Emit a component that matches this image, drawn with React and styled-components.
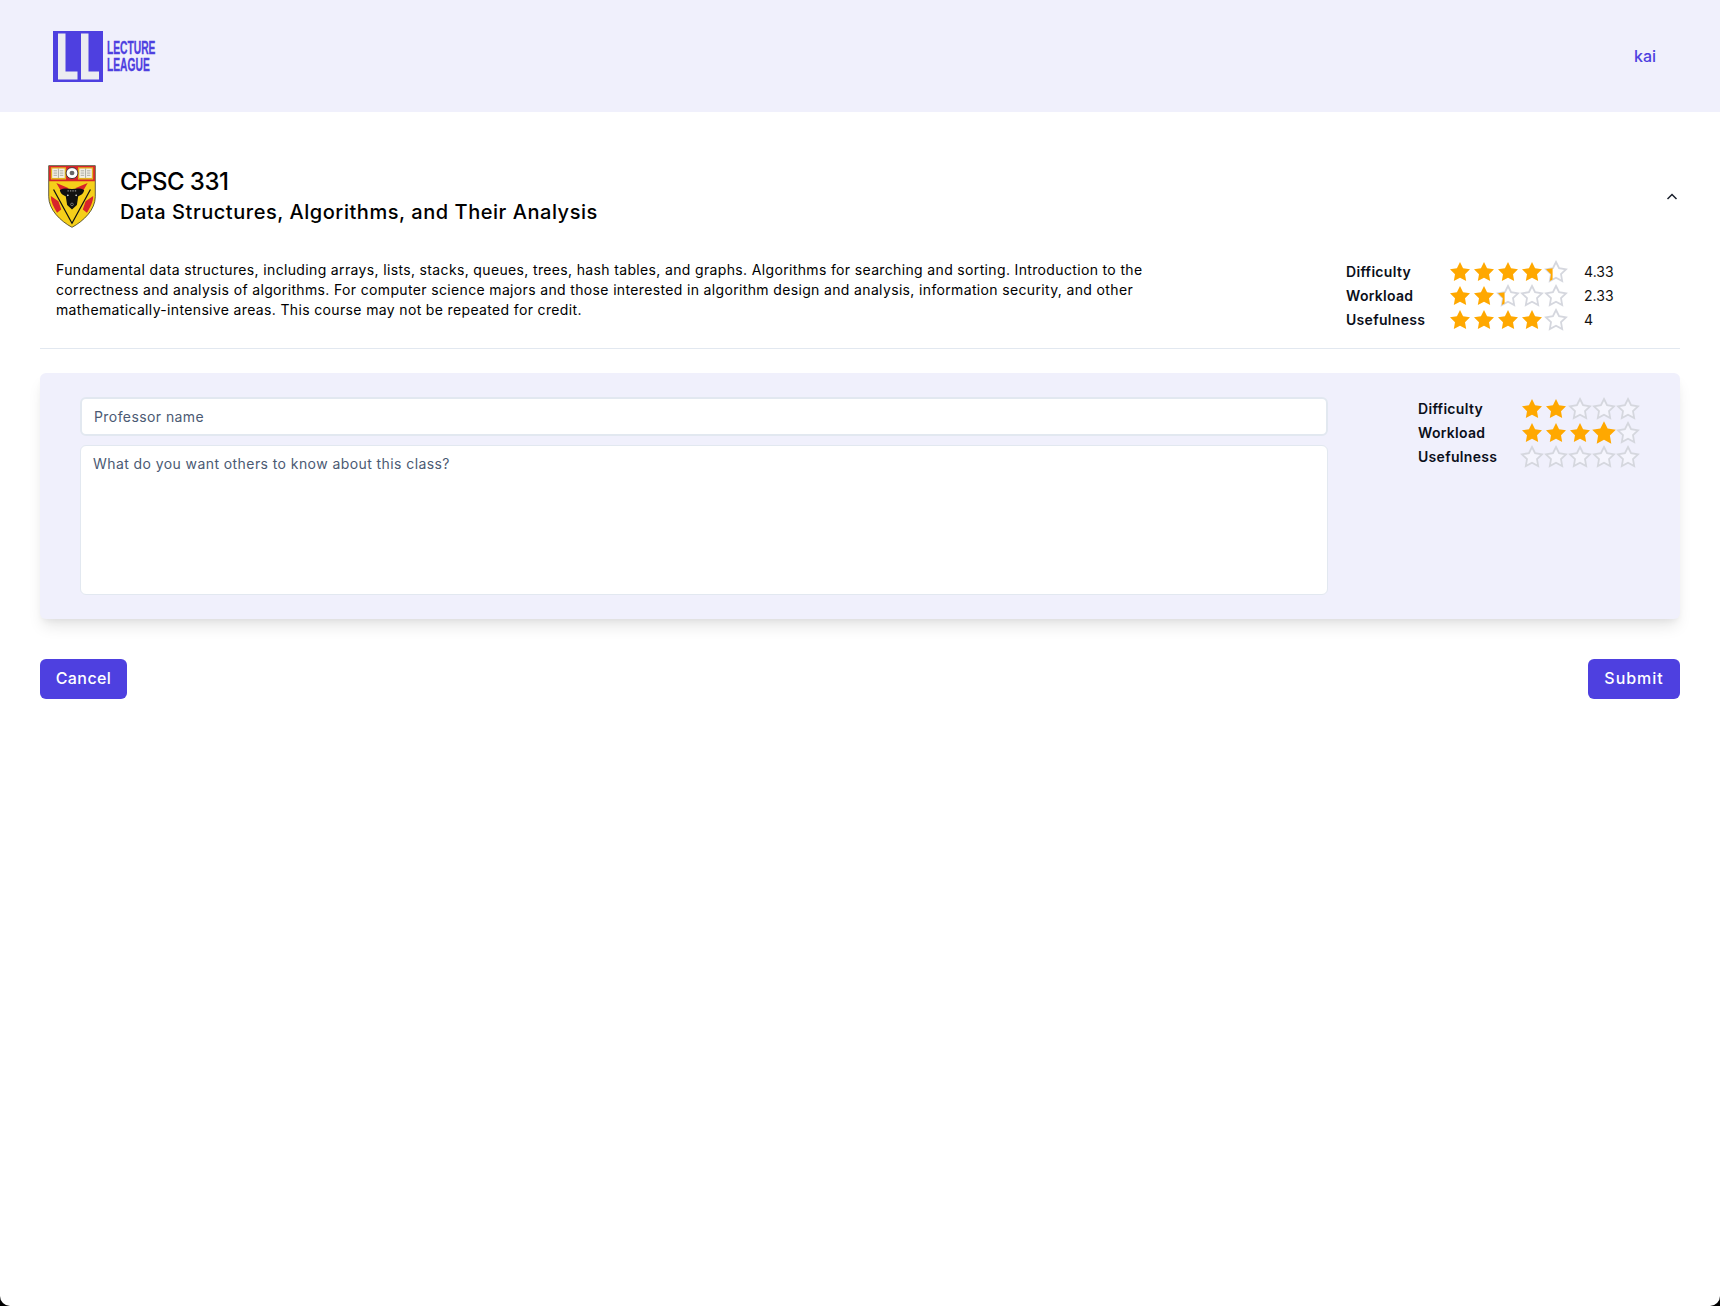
import React from "react";
import styled, { createGlobalStyle } from "styled-components";

const Global = createGlobalStyle`
  html, body { margin: 0; padding: 0; background: #000; }
  body { font-family: Inter, "Open Sans", sans-serif; color: #000; }
  #root { min-height: 1306px; background: #fff; border-radius: 0 0 10px 10px; overflow: hidden; }
  * { box-sizing: border-box; }
`;

const Header = styled.header`
  height: 112px;
  background: #f0f0fc;
  display: flex;
  align-items: center;
  justify-content: space-between;
  padding: 0 64px 0 53px;
`;
const Brand = styled.div`
  display: flex;
  align-items: center;
  gap: 4px;
`;
const LogoMark = styled.svg`
  display: block;
  width: 50px;
  height: 51px;
  flex: none;
`;
const BrandText = styled.div`
  width: 49px;
  color: #4e40e0;
  font-family: "Liberation Sans Narrow", "Liberation Sans", sans-serif;
  font-size: 19px;
  line-height: 17px;
  font-weight: 700;
  -webkit-text-stroke: 0.3px #4e40e0;
`;
const BrandLine = styled.div`
  transform: scaleX(0.54);
  transform-origin: left center;
  white-space: nowrap;
`;
const UserName = styled.span`
  font-family: Inter, sans-serif;
  font-size: 16px;
  font-weight: 500;
  color: #4e40e0;
`;
const Main = styled.main`
  padding: 0 40px;
`;
const CourseHead = styled.div`
  display: flex;
  align-items: center;
  height: 64px;
  margin-top: 52px;
  padding: 0 0 0 8px;
`;
const Crest = styled.svg`
  display: block;
  width: 48px;
  height: 63px;
  flex: none;
`;
const Titles = styled.div`
  margin-left: 24px;
  flex: 1;
`;
const Code = styled.h1`
  margin: 0;
  font-size: 24px;
  line-height: 32px;
  font-weight: 500;
  letter-spacing: -0.022em;
`;
const Name = styled.h2`
  margin: 0;
  font-size: 20px;
  line-height: 28px;
  font-weight: 500;
  letter-spacing: 0.027em;
`;
const Chevron = styled.svg`
  width: 16px;
  height: 16px;
  flex: none;
`;
const Summary = styled.section`
  display: flex;
  justify-content: space-between;
  padding: 32px 80px 0 16px;
  height: 121px;
  border-bottom: 1px solid #e2e8f0;
`;
const Description = styled.p`
  margin: 0;
  width: 1100px;
  font-size: 14px;
  line-height: 20px;
  letter-spacing: 0.025em;
  white-space: nowrap;
`;
const RatingGrid = styled.div`
  display: grid;
  grid-template-columns: 102px 120px ${(p) => (p.$values ? "32px" : "")};
  grid-auto-rows: 24px;
  align-items: center;
  align-self: flex-start;
`;
const Label = styled.span`
  font-size: 14px;
  font-weight: 600;
  color: #0b0f1a;
  letter-spacing: 0.022em;
  padding-bottom: 1px;
`;
const Value = styled.span`
  font-size: 14px;
  margin-left: 16px;
  letter-spacing: 0.005em;
  color: #111;
  padding-bottom: 1px;
`;
const Stars = styled.div`
  display: flex;
`;
const StarIcon = styled.svg`
  display: block;
  width: 24px;
  height: 24px;
  flex: none;
  overflow: visible;
  transform: scale(${(p) => p.$scale || 1});
`;
const FormCard = styled.form`
  margin-top: 24px;
  height: 246px;
  background: #f0f0fc;
  border-radius: 6px;
  padding: 24px 40px 0;
  display: flex;
  justify-content: space-between;
  box-shadow: 0 10px 15px -3px rgba(0, 0, 0, 0.1), 0 4px 6px -2px rgba(0, 0, 0, 0.05);
`;
const Fields = styled.div`
  width: 1248px;
  display: flex;
  flex-direction: column;
  gap: 9px;
`;
const NameInput = styled.input`
  display: block;
  height: 39px;
  border: 2px solid #e2e8f0;
  border-radius: 6px;
  background: #fff;
  padding: 0 12px 1px;
  font: 400 14px Inter, sans-serif;
  letter-spacing: 0.03em;
  &::placeholder { color: #4b5a73; opacity: 1; }
`;
const Comment = styled.textarea`
  display: block;
  height: 150px;
  border: 1px solid #e2e8f0;
  border-radius: 6px;
  background: #fff;
  padding: 8px 12px;
  resize: none;
  font: 400 14px/20px Inter, sans-serif;
  letter-spacing: 0.03em;
  &::placeholder { color: #4b5a73; opacity: 1; }
`;
const Actions = styled.div`
  margin-top: 40px;
  display: flex;
  justify-content: space-between;
`;
const Button = styled.button`
  height: 40px;
  width: ${(p) => p.$w}px;
  border: 0;
  border-radius: 6px;
  background: #4e40e0;
  color: #fff;
  padding: 0 0 2px;
  font: 500 16px Inter, sans-serif;
  letter-spacing: ${(p) => p.$ls};
`;

const POINTS = "12,2 15.09,8.26 22,9.27 17,14.14 18.18,21.02 12,17.77 5.82,21.02 7,14.14 2,9.27 8.91,8.26";

function Star({ fill = 0, scale, id }) {
  const full = fill >= 1;
  return (
    <StarIcon viewBox="0 0 24 24" $scale={scale}>
      {!full && <polygon points={POINTS} fill="rgba(255,255,255,0.35)" stroke="#d5d7de" strokeWidth="1.8" strokeLinejoin="miter" />}
      {fill > 0 && (
        <>
          {!full && (
            <clipPath id={id}>
              <rect x="0" y="0" width={2 + 20 * fill} height="24" />
            </clipPath>
          )}
          <polygon points={POINTS} fill="#ffa800" clipPath={full ? undefined : `url(#${id})`} />
        </>
      )}
    </StarIcon>
  );
}

function StarRow({ value, hover, id }) {
  return (
    <Stars>
      {[0, 1, 2, 3, 4].map((i) => (
        <Star key={i} id={`${id}-${i}`} fill={Math.max(0, Math.min(1, value - i))} scale={hover === i ? 1.18 : 1} />
      ))}
    </Stars>
  );
}

const Logo = () => (
  <Brand>
    <LogoMark viewBox="0 0 50 51">
      <rect width="50" height="51" fill="#4e40e0" />
      <path d="M5 2.500h7.500v38h12v8H5z M28 2.500h7.500v38h10.500v8H28z" fill="#ececf1" />
    </LogoMark>
    <BrandText>
      <BrandLine>LECTURE</BrandLine>
      <BrandLine>LEAGUE</BrandLine>
    </BrandText>
  </Brand>
);

const CrestArt = () => (
  <Crest viewBox="12 12 138 195" preserveAspectRatio="none">
    <path d="M14 14H148V110C148 150 115 185 81 205C47 185 14 150 14 110Z" fill="#f5cf1a" stroke="#1a1a1a" strokeWidth="2" />
    <path d="M15 15H147V62H15Z" fill="#d8232a" />
    <rect x="20" y="19" width="44" height="38" fill="#e2b21e" />
    <rect x="24" y="23" width="36" height="29" fill="#f2efe6" />
    <rect x="98" y="19" width="44" height="38" fill="#e2b21e" />
    <rect x="102" y="23" width="36" height="29" fill="#f2efe6" />
    <path d="M42 23v29M120 23v29M28 30h10M28 37h10M28 44h10M46 30h10M46 37h10M46 44h10M106 30h10M106 37h10M106 44h10M124 30h10M124 37h10M124 44h10" stroke="#8a8a80" strokeWidth="2" />
    <circle cx="81" cy="37" r="17" fill="#fff" stroke="#2a2a2a" strokeWidth="2.500" />
    <circle cx="81" cy="37" r="7" fill="#666" />
    <path d="M36 68L72 84L50 94ZM126 68L90 84L112 94Z" fill="#d8232a" />
    <path d="M20 108L42 124L50 150L38 160C28 142 20 126 20 108ZM142 108L120 124L112 150L124 160C134 142 142 126 142 108Z" fill="#d8232a" />
    <path d="M28 88L81 192L134 88" fill="none" stroke="#111" strokeWidth="3.500" />
    <path d="M46 90C58 82 70 86 81 86C92 86 104 82 116 90C114 102 104 106 99 109L95 136L81 150L67 136L63 109C58 106 48 102 46 90Z" fill="#111" />
    <path d="M68 92h26" stroke="#8d8d8d" strokeWidth="4" strokeDasharray="4 3" />
    <circle cx="69" cy="106" r="2.500" fill="#ddd" />
    <circle cx="93" cy="106" r="2.500" fill="#ddd" />
    <circle cx="81" cy="134" r="4" fill="none" stroke="#bbb" strokeWidth="1.500" />
  </Crest>
);

export default function App() {
  return (
    <>
      <Global />
      <Header>
        <Logo />
        <UserName>kai</UserName>
      </Header>
      <Main>
        <CourseHead>
          <CrestArt />
          <Titles>
            <Code>CPSC 331</Code>
            <Name>Data Structures, Algorithms, and Their Analysis</Name>
          </Titles>
          <Chevron viewBox="0 0 16 16" fill="none" stroke="#1a202c" strokeWidth="1.500">
            <path d="M3.500 11L8 6.500L12.500 11" />
          </Chevron>
        </CourseHead>
        <Summary>
          <Description>
            Fundamental data structures, including arrays, lists, stacks, queues, trees, hash tables, and graphs. Algorithms for searching and sorting. Introduction to the
            <br />
            correctness and analysis of algorithms. For computer science majors and those interested in algorithm design and analysis, information security, and other
            <br />
            mathematically-intensive areas. This course may not be repeated for credit.
          </Description>
          <RatingGrid $values>
            <Label>Difficulty</Label><StarRow id="a" value={4.33} /><Value>4.33</Value>
            <Label>Workload</Label><StarRow id="b" value={2.33} /><Value>2.33</Value>
            <Label>Usefulness</Label><StarRow id="c" value={4} /><Value>4</Value>
          </RatingGrid>
        </Summary>
        <FormCard>
          <Fields>
            <NameInput placeholder="Professor name" />
            <Comment placeholder="What do you want others to know about this class?" />
          </Fields>
          <RatingGrid>
            <Label>Difficulty</Label><StarRow id="d" value={2} />
            <Label>Workload</Label><StarRow id="e" value={4} hover={3} />
            <Label>Usefulness</Label><StarRow id="f" value={0} />
          </RatingGrid>
        </FormCard>
        <Actions>
          <Button type="button" $w={87} $ls="0.025em">Cancel</Button>
          <Button type="button" $w={92} $ls="0.06em">Submit</Button>
        </Actions>
      </Main>
    </>
  );
}
